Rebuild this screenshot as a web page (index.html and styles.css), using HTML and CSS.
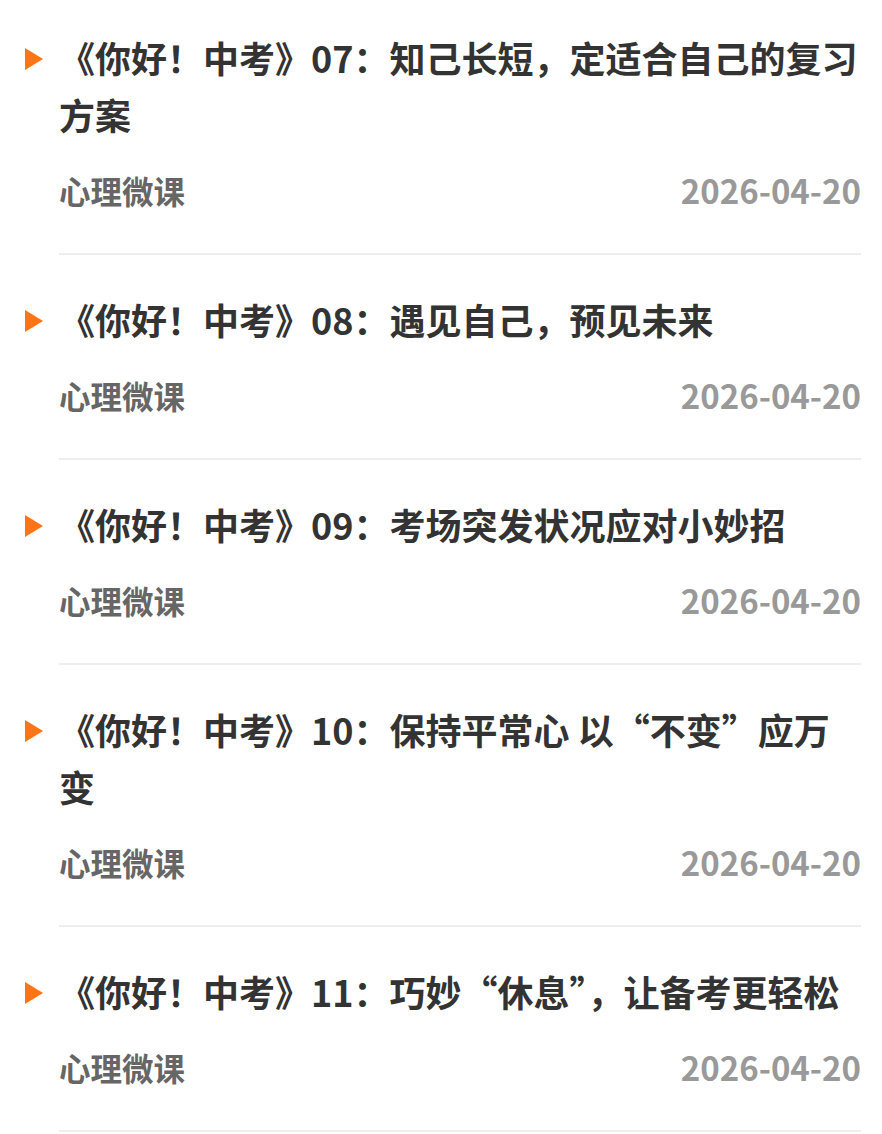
FILE: index.html
```html
<!DOCTYPE html>
<html lang="zh-CN">
<head>
    <meta charset="UTF-8">
    <meta name="viewport" content="width=device-width, initial-scale=1.0">
    <title>心理微课</title>
    <link rel="stylesheet" href="styles.css">
</head>
<body>

    <ul class="list">
        <li class="item">
            <span class="marker"></span>
            <div class="content">
                <h3 class="title">《你好！中考》07：知己长短，定适合自己的复习方案</h3>
                <div class="meta">
                    <span class="category">心理微课</span>
                    <span class="date">2026-04-20</span>
                </div>
            </div>
        </li>
        <li class="item">
            <span class="marker"></span>
            <div class="content">
                <h3 class="title">《你好！中考》08：遇见自己，预见未来</h3>
                <div class="meta">
                    <span class="category">心理微课</span>
                    <span class="date">2026-04-20</span>
                </div>
            </div>
        </li>
        <li class="item">
            <span class="marker"></span>
            <div class="content">
                <h3 class="title">《你好！中考》09：考场突发状况应对小妙招</h3>
                <div class="meta">
                    <span class="category">心理微课</span>
                    <span class="date">2026-04-20</span>
                </div>
            </div>
        </li>
        <li class="item">
            <span class="marker"></span>
            <div class="content">
                <h3 class="title">《你好！中考》10：保持平常心 以“不变”应万变</h3>
                <div class="meta">
                    <span class="category">心理微课</span>
                    <span class="date">2026-04-20</span>
                </div>
            </div>
        </li>
        <li class="item">
            <span class="marker"></span>
            <div class="content">
                <h3 class="title">《你好！中考》11：巧妙“休息”，让备考更轻松</h3>
                <div class="meta">
                    <span class="category">心理微课</span>
                    <span class="date">2026-04-20</span>
                </div>
            </div>
        </li>
    </ul>

</body>
</html>
```

FILE: styles.css
```css
body {
    margin: 0;
    background: #fff;
    font-family: "Noto Sans CJK SC", "Noto Sans", sans-serif;
}
.list {
    list-style: none;
    margin: -7px 0 0;
    padding: 0 21px 0 25px;
}
.item {
    display: flex;
    align-items: flex-start;
    gap: 16px;
}
.marker {
    flex: none;
    width: 0;
    height: 0;
    margin-top: 55px;
    border-top: 11px solid transparent;
    border-bottom: 11px solid transparent;
    border-left: 18px solid #ff7414;
}
.content {
    flex: 1;
    min-width: 0;
    padding: 36px 0 39px;
    border-bottom: 2px solid #eee;
}
.title {
    margin: 0;
    font-size: 36px;
    line-height: 57px;
    font-weight: bold;
    color: #333;
}
.meta {
    display: flex;
    justify-content: space-between;
    align-items: center;
    margin-top: 23px;
    line-height: 48px;
    font-weight: bold;
}
.category {
    font-size: 31.5px;
    color: #666;
}
.date {
    font-size: 33px;
    color: #999;
}
```
